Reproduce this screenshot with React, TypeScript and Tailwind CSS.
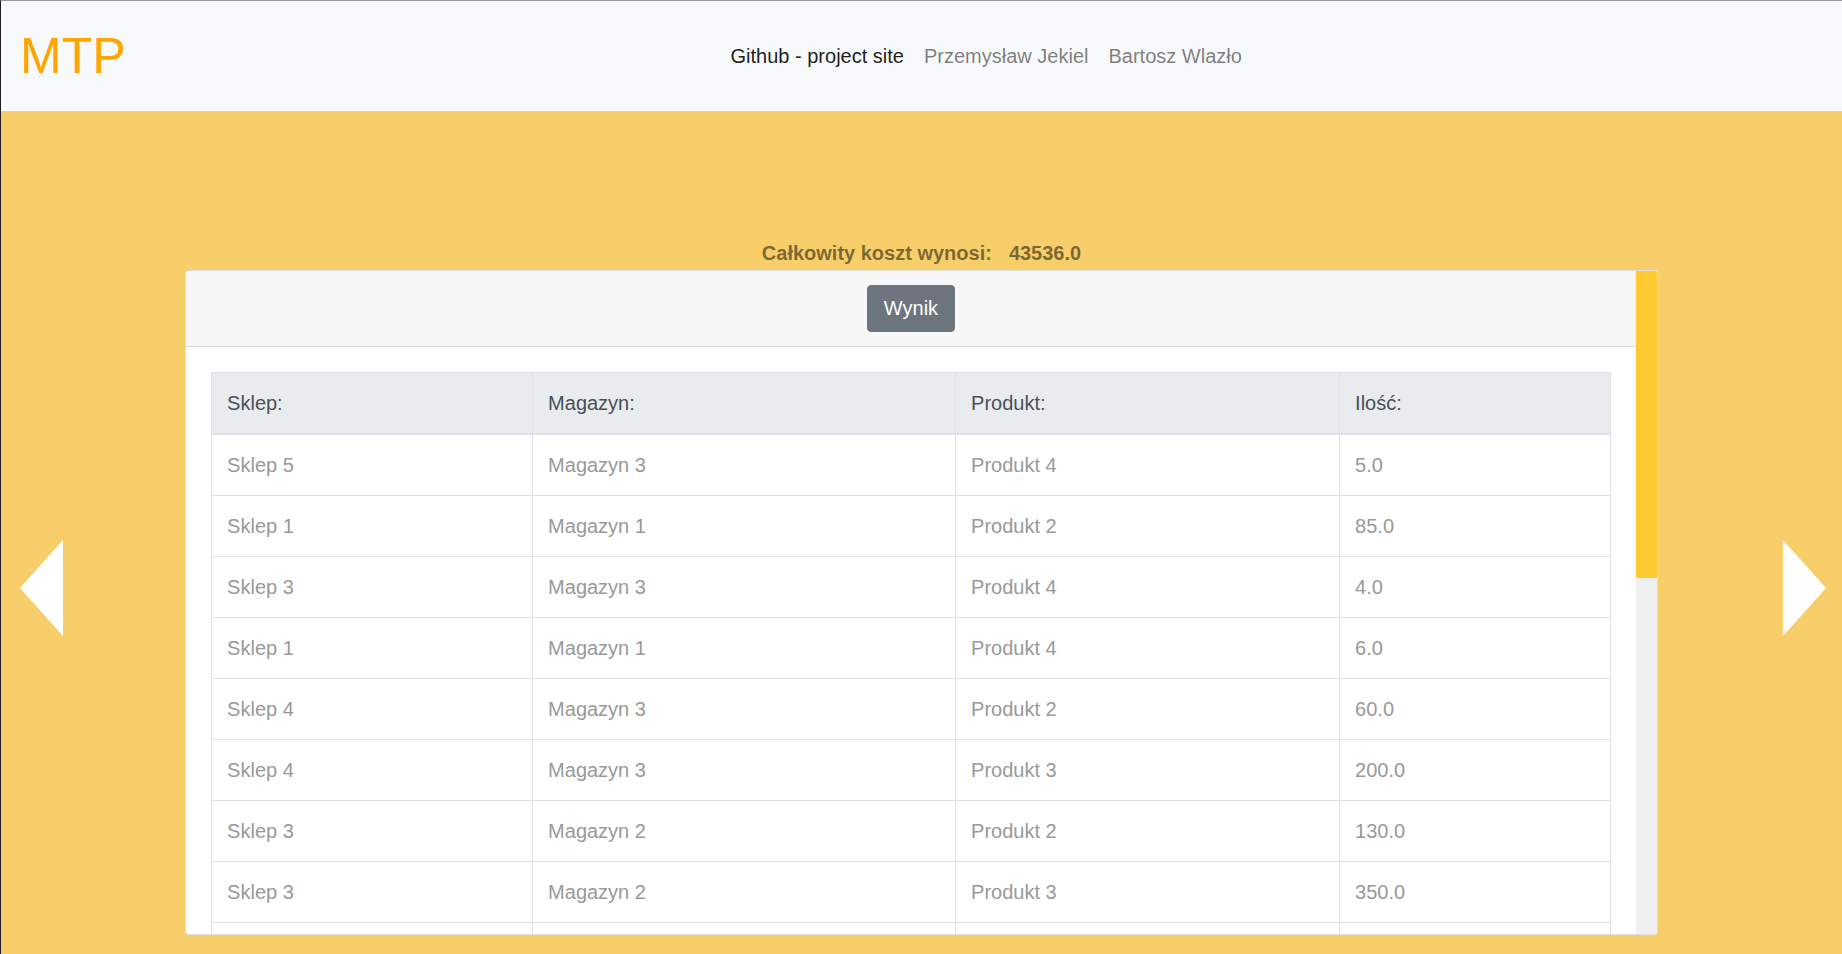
import React from "react";

type Row = { shop: string; store: string; product: string; qty: string };

const rows: Row[] = [
  { shop: "Sklep 5", store: "Magazyn 3", product: "Produkt 4", qty: "5.0" },
  { shop: "Sklep 1", store: "Magazyn 1", product: "Produkt 2", qty: "85.0" },
  { shop: "Sklep 3", store: "Magazyn 3", product: "Produkt 4", qty: "4.0" },
  { shop: "Sklep 1", store: "Magazyn 1", product: "Produkt 4", qty: "6.0" },
  { shop: "Sklep 4", store: "Magazyn 3", product: "Produkt 2", qty: "60.0" },
  { shop: "Sklep 4", store: "Magazyn 3", product: "Produkt 3", qty: "200.0" },
  { shop: "Sklep 3", store: "Magazyn 2", product: "Produkt 2", qty: "130.0" },
  { shop: "Sklep 3", store: "Magazyn 2", product: "Produkt 3", qty: "350.0" },
  { shop: "Sklep 2", store: "Magazyn 1", product: "Produkt 1", qty: "120.0" },
];

const headers = ["Sklep:", "Magazyn:", "Produkt:", "Ilość:"];

function Navbar() {
  return (
    <nav className="flex h-[110px] shrink-0 items-center bg-[#f8f9fa] pl-[19px]">
      <span className="text-[50px] leading-none text-[#ffa500]">MTP</span>
      <ul className="ml-[595px] flex text-[20px]">
        <li className="px-[10px] text-black/90">Github - project site</li>
        <li className="px-[10px] text-black/50">Przemysław Jekiel</li>
        <li className="px-[10px] text-black/50">Bartosz Wlazło</li>
      </ul>
    </nav>
  );
}

function ResultTable() {
  return (
    <table className="w-full table-fixed border-collapse text-[20px] leading-[30px]">
      <colgroup>
        <col className="w-[321px]" />
        <col className="w-[423px]" />
        <col className="w-[384px]" />
        <col />
      </colgroup>
      <thead>
        <tr className="bg-[#e9ecef] text-[#495057]">
          {headers.map((h) => (
            <th
              key={h}
              className="border border-b-2 border-[#dee2e6] px-[15px] py-[15px] text-left font-normal"
            >
              {h}
            </th>
          ))}
        </tr>
      </thead>
      <tbody className="text-[#999]">
        {rows.map((r, i) => (
          <tr key={i}>
            <td className="border border-[#dee2e6] px-[15px] py-[15px]">{r.shop}</td>
            <td className="border border-[#dee2e6] px-[15px] py-[15px]">{r.store}</td>
            <td className="border border-[#dee2e6] px-[15px] py-[15px]">{r.product}</td>
            <td className="border border-[#dee2e6] px-[15px] py-[15px]">{r.qty}</td>
          </tr>
        ))}
      </tbody>
    </table>
  );
}

export default function App() {
  return (
    <div className="relative flex h-screen flex-col overflow-hidden border-l border-t border-l-[#1e1e1e] border-t-[#9a9a9a] font-['Liberation_Sans',Arial,sans-serif]">
      <div className="pointer-events-none absolute left-[-1px] top-[332px] h-[58px] w-px bg-[#5a5a5a]" />
      <Navbar />

      <main className="flex flex-1 flex-col items-center bg-[#f7ce69]">
        <div className="mt-[127px] flex gap-[17px] text-[20px] font-bold leading-[30px] text-black/50">
          <span>Całkowity koszt wynosi:</span>
          <span>43536.0</span>
        </div>

        <div className="mt-[2px] flex h-[665px] w-[80%] overflow-hidden rounded-[4px] border border-black/[0.125] bg-white">
          <div className="min-w-0 flex-1 overflow-hidden">
            <div className="flex justify-center border-b border-black/[0.125] bg-[#f7f7f7] py-[14px]">
              <button className="rounded-[4px] border border-[#6c757d] bg-[#6c757d] px-4 py-2 text-[20px] leading-[29px] text-white">
                Wynik
              </button>
            </div>
            <div className="p-[25px]">
              <ResultTable />
            </div>
          </div>
          <div className="flex w-[21px] shrink-0 flex-col bg-[#f0f0f0]">
            <div className="h-[307px] bg-[#ffca2f]" />
          </div>
        </div>
      </main>

      <svg
        className="absolute left-[19px] top-[539px]"
        width="43"
        height="96"
        viewBox="0 0 43 96"
      >
        <polygon points="0,48 43,0 43,96" fill="#fff" />
      </svg>
      <svg
        className="absolute left-[1782px] top-[539px]"
        width="43"
        height="96"
        viewBox="0 0 43 96"
      >
        <polygon points="0,0 43,48 0,96" fill="#fff" />
      </svg>
    </div>
  );
}
